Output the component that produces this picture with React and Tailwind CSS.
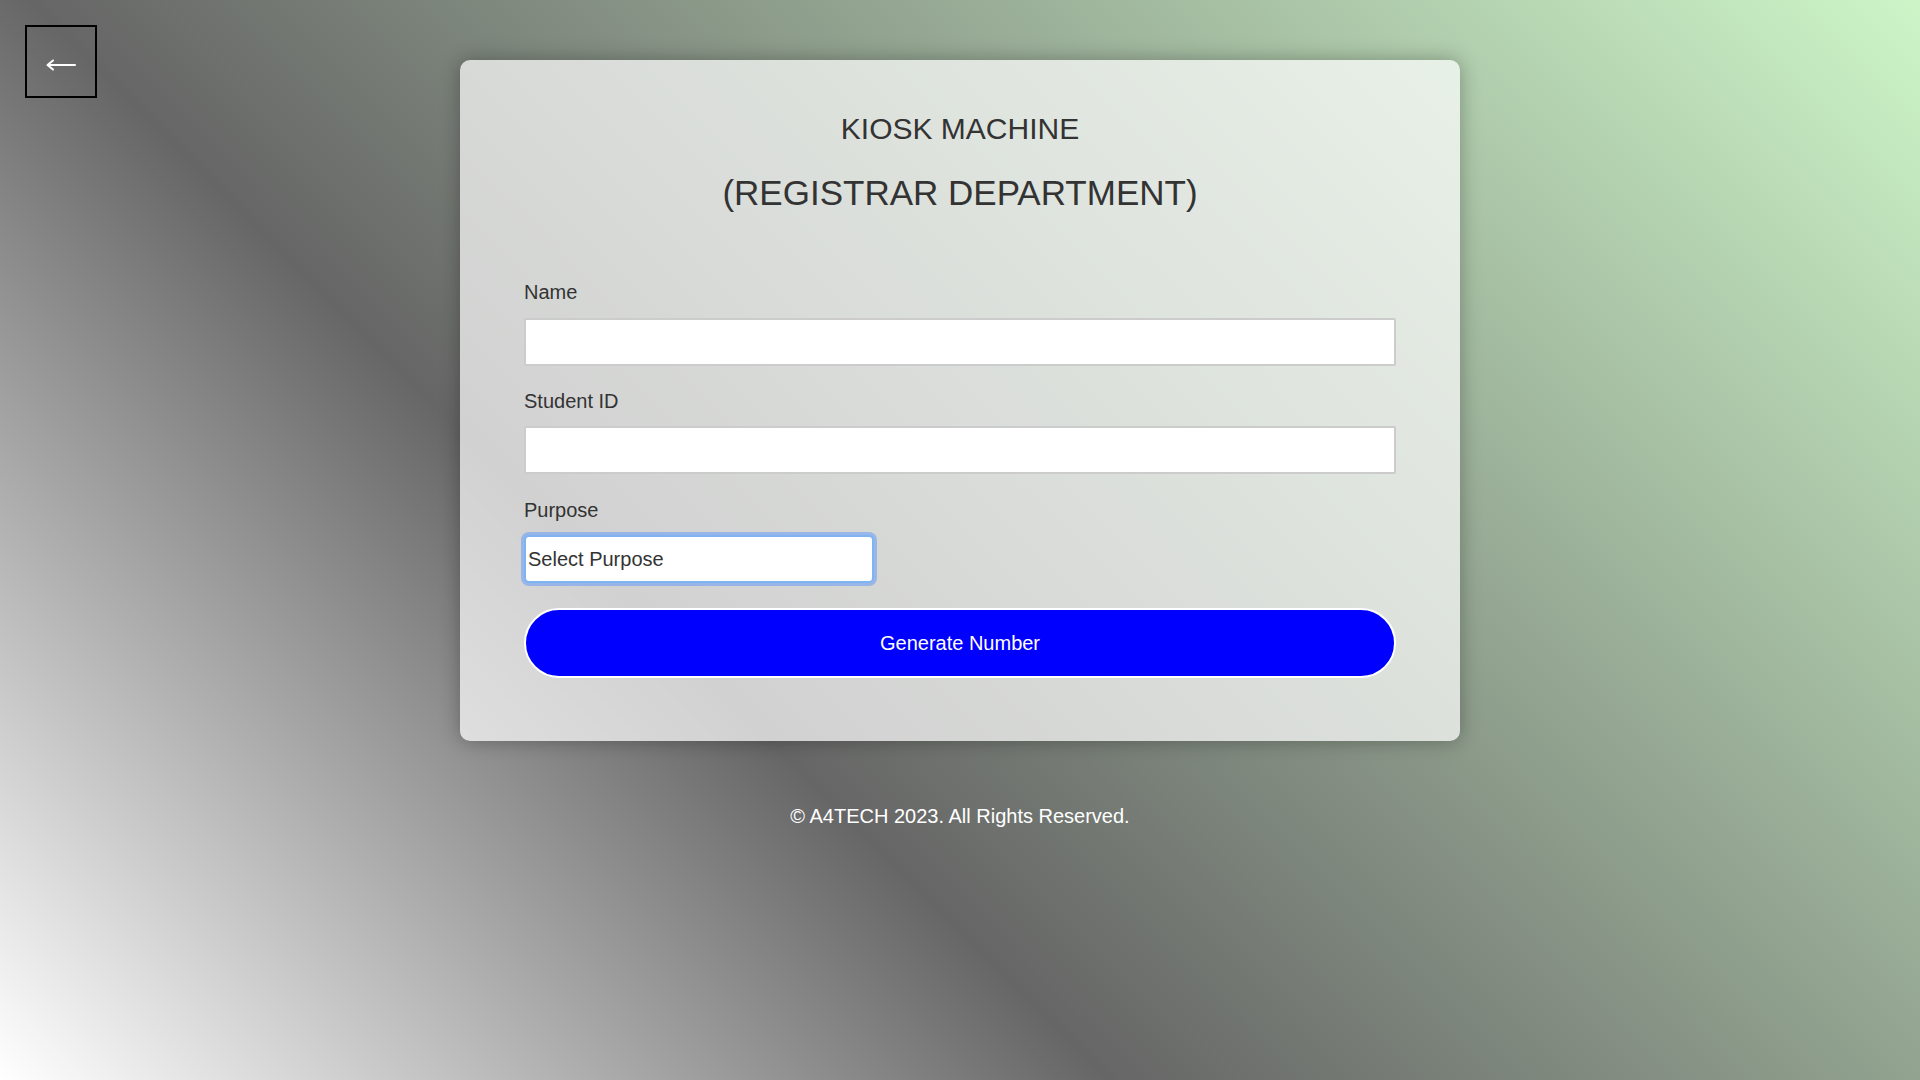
import React from "react";

const labelCls = "block text-[20px] leading-none text-[#333]";
const inputCls = "block h-12 w-full rounded-[2px] border-2 border-[#cccccc] bg-white outline-none";

export default function App() {
  return (
    <div className="relative min-h-screen bg-[linear-gradient(45deg,#ffffff_0%,#666666_37%,#cdf5c8_100%)] pt-[60px] font-['Liberation_Sans',Arial,sans-serif]">
      {/* back button */}
      <button className="absolute left-[25px] top-[25px] flex h-[73px] w-[72px] items-center justify-center border-2 border-black pt-[6px]">
        <svg width="30" height="12" viewBox="0 0 30 12" fill="none" stroke="white" strokeWidth="2" strokeLinecap="round" strokeLinejoin="round">
          <path d="M29 6H2" />
          <path d="M7 1.5L1.5 6L7 10.5" />
        </svg>
      </button>

      <div className="mx-auto w-[1000px] rounded-[10px] bg-white/70 px-[64px] pt-[54px] pb-[63px] shadow-[0_0_20px_rgba(0,0,0,0.3)]">
        <h2 className="text-center text-[30px] leading-none text-[#333]">KIOSK MACHINE</h2>
        <h1 className="mt-[31px] text-center text-[35px] leading-none text-[#333]">(REGISTRAR DEPARTMENT)</h1>

        <form>
          <label className={"mt-[72px] " + labelCls}>Name</label>
          <input type="text" className={"mt-4 " + inputCls} />

          <label className={"mt-[25px] " + labelCls}>Student ID</label>
          <input type="text" className={"mt-[15px] " + inputCls} />

          <label className={"mt-[26px] " + labelCls}>Purpose</label>
          <select
            defaultValue=""
            className="mt-[15px] block h-12 w-[350px] appearance-none rounded-[5px] border-2 border-[#7fb3f2] bg-white pl-[2px] text-[20px] text-[#333] shadow-[0_0_0_3px_rgba(77,144,254,0.45)] outline-none"
          >
            <option value="">Select Purpose</option>
            <option value="tor">Transcript of Records</option>
            <option value="cert">Certification</option>
          </select>

          <button
            type="button"
            className="mt-[25px] block h-[70px] w-full rounded-full border-2 border-white bg-[#0000ff] text-[20px] text-white"
          >
            Generate Number
          </button>
        </form>
      </div>

      <p className="mt-[65px] text-center text-[20px] leading-none text-white">© A4TECH 2023. All Rights Reserved.</p>
    </div>
  );
}
